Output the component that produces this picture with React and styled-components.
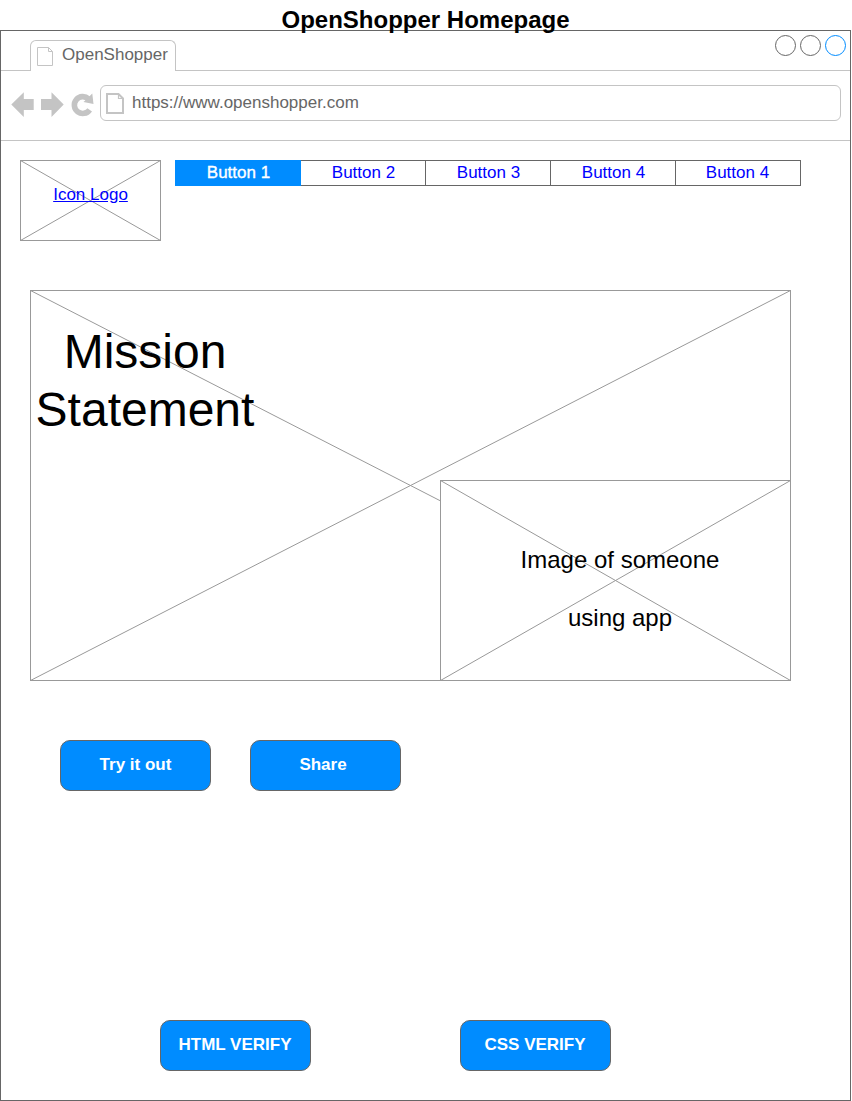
import React from "react";
import styled, { createGlobalStyle } from "styled-components";

const GlobalStyle = createGlobalStyle`
  *, *::before, *::after { box-sizing: border-box; }
  body {
    margin: 0;
    background: #fff;
    font-family: "Liberation Sans", Arial, sans-serif;
    font-size: 17px;
    overflow: hidden;
  }
`;

const Page = styled.div`
  width: 852px;
  height: 1101px;
`;

const Title = styled.h1`
  position: relative;
  z-index: 1;
  margin: 0;
  width: 851px;
  height: 30px;
  padding-top: 5px;
  font-size: 24px;
  line-height: 29px;
  text-align: center;
`;

const BrowserWindow = styled.main`
  width: 851px;
  height: 1071px;
  border: 1px solid #666;
`;

const TabStrip = styled.div`
  display: flex;
  justify-content: space-between;
  height: 40px;
  padding: 9px 4px 0 29px;
  border-bottom: 1px solid #c4c4c4;
`;

const Tab = styled.div`
  display: flex;
  width: 146px;
  height: 31px;
  padding: 5px 0 0 6px;
  gap: 8px;
  border: 1px solid #c4c4c4;
  border-bottom: 0;
  border-radius: 6px 6px 0 0;
  background: #fff;
  color: #666;
  line-height: 17px;
`;

const WindowControls = styled.div`
  display: flex;
  gap: 4px;
  margin-top: -5px;
`;

const Control = styled.span`
  width: 21px;
  height: 21px;
  border: 1px solid ${(p) => (p.$active ? "#008cff" : "#666")};
  border-radius: 50%;
`;

const Toolbar = styled.div`
  display: flex;
  height: 70px;
  padding: 14px 9px 0 10px;
  border-bottom: 1px solid #c4c4c4;
`;

const NavIcons = styled.svg`
  display: block;
  flex: none;
  width: 89px;
  height: 37px;
`;

const AddressBar = styled.div`
  display: flex;
  flex: 1;
  height: 36px;
  padding: 7px 0 0 5px;
  gap: 8px;
  border: 1px solid #c4c4c4;
  border-radius: 6px;
  color: #666;
  line-height: 20px;
`;

const FileSvg = styled.svg`
  display: block;
  flex: none;
  margin-top: ${(p) => p.$drop || 0}px;
`;

const Header = styled.header`
  display: flex;
  align-items: flex-start;
  gap: 14px;
  padding: 19px 0 0 19px;
`;

const Placeholder = styled.div`
  position: relative;
  width: ${(p) => p.$width}px;
  height: ${(p) => p.$height}px;
  border: 1px solid #999;
  background: #fff;
`;

const CrossSvg = styled.svg`
  position: absolute;
  top: -1px;
  left: -1px;
`;

const LogoLink = styled.a`
  position: relative;
  display: block;
  padding-top: 24px;
  color: #0000ff;
  line-height: 20px;
  text-align: center;
  text-decoration: underline;
`;

const ButtonBar = styled.nav`
  display: flex;
  height: 26px;
  border: 1px solid #666;
  width: 626px;
`;

const BarItem = styled.a`
  flex: 0 0 ${(p) => (p.$active ? 126 : 125)}px;
  height: 26px;
  margin: ${(p) => (p.$active ? "-1px 0 0 -1px" : "-1px 0 0")};
  padding: ${(p) => (p.$last ? "0 2px 0 0" : "0 0 0 1px")};
  border-right: ${(p) => (p.$last || p.$active ? "0" : "1px solid #666")};
  background: ${(p) => (p.$active ? "#008cff" : "none")};
  color: ${(p) => (p.$active ? "#fff" : "#0000ff")};
  -webkit-text-stroke: ${(p) => (p.$active ? "0.35px #fff" : "0")};
  line-height: 25px;
  text-align: center;
`;

const Hero = styled.section`
  padding: 49px 0 0 29px;
`;

const Mission = styled.h2`
  position: relative;
  width: 228px;
  height: 189px;
  margin: 0;
  padding-top: 32px;
  font-size: 48px;
  font-weight: 400;
  line-height: 58px;
  text-align: center;
`;

const AppImage = styled.div`
  margin: 0 0 0 409px;
`;

const Caption = styled.p`
  position: relative;
  margin: 0;
  padding: 50px 0 0 9px;
  font-size: 24px;
  line-height: 58px;
  text-align: center;
`;

const Actions = styled.div`
  display: flex;
  gap: ${(p) => p.$gap}px;
  padding: ${(p) => p.$top}px 0 0 ${(p) => p.$left}px;
`;

const ActionButton = styled.button`
  width: 151px;
  height: 51px;
  padding: 0 ${(p) => p.$shift || 0}px 2px 0;
  border: 1px solid #666;
  border-radius: 10px;
  background: #008cff;
  color: #fff;
  font: bold 17px/20px "Liberation Sans", Arial, sans-serif;
  text-align: center;
`;

function Cross({ width, height }) {
  return (
    <CrossSvg width={width} height={height} stroke="#999" fill="none">
      <path d={`M.5 .5L${width - 0.5} ${height - 0.5}M.5 ${height - 0.5}L${width - 0.5} .5`} />
    </CrossSvg>
  );
}

function SmallFileIcon() {
  return (
    <FileSvg $drop={1} width="17" height="19" fill="none" stroke="#c4c4c4">
      <path d="M.5 .5H11.5L15.5 4.5V18.5H.5ZM11.5 .5V4.5H15.5" />
    </FileSvg>
  );
}

function FileIcon() {
  return (
    <FileSvg width="18" height="21" fill="none" stroke="#c4c4c4">
      <path d="M1 1H12.5L17 5.5V20H1Z" strokeWidth="2" />
      <path d="M12.5 1V5.5H17" strokeWidth="1.2" />
    </FileSvg>
  );
}

const items = ["Button 1", "Button 2", "Button 3", "Button 4", "Button 4"];

export default function App() {
  return (
    <Page>
      <GlobalStyle />
      <Title>OpenShopper Homepage</Title>
      <BrowserWindow>
        <TabStrip>
          <Tab>
            <SmallFileIcon />
            OpenShopper
          </Tab>
          <WindowControls>
            <Control />
            <Control />
            <Control $active />
          </WindowControls>
        </TabStrip>
        <Toolbar>
          <NavIcons viewBox="0 0 89 37" fill="#c4c4c4">
            <path d="M.3 19.5L12.8 7.3V14H22.7V25H12.8V31.9Z" />
            <path d="M52.7 19.5L40.5 7.3V14H30V25H40.5V31.9Z" />
            <path d="M78.7 24.8A8.4 8.4 0 1 1 77.5 13.9" fill="none" stroke="#c4c4c4" strokeWidth="5.6" />
            <path d="M81.3 8.5L82.5 19L72.5 17Z" />
          </NavIcons>
          <AddressBar>
            <FileIcon />
            https://www.openshopper.com
          </AddressBar>
        </Toolbar>
        <Header>
          <Placeholder $width={141} $height={81}>
            <Cross width={141} height={81} />
            <LogoLink>Icon Logo</LogoLink>
          </Placeholder>
          <ButtonBar>
            {items.map((label, i) => (
              <BarItem key={i} $active={i === 0} $last={i === 4}>{label}</BarItem>
            ))}
          </ButtonBar>
        </Header>
        <Hero>
          <Placeholder $width={761} $height={391}>
            <Cross width={761} height={391} />
            <Mission>Mission Statement</Mission>
            <AppImage>
              <Placeholder $width={351} $height={201}>
                <Cross width={351} height={201} />
                <Caption>Image of someone<br />using app</Caption>
              </Placeholder>
            </AppImage>
          </Placeholder>
        </Hero>
        <Actions $top={59} $left={59} $gap={39}>
          <ActionButton>Try it out</ActionButton>
          <ActionButton $shift={5}>Share</ActionButton>
        </Actions>
        <Actions $top={229} $left={159} $gap={149}>
          <ActionButton $shift={1}>HTML VERIFY</ActionButton>
          <ActionButton $shift={1}>CSS VERIFY</ActionButton>
        </Actions>
      </BrowserWindow>
    </Page>
  );
}
